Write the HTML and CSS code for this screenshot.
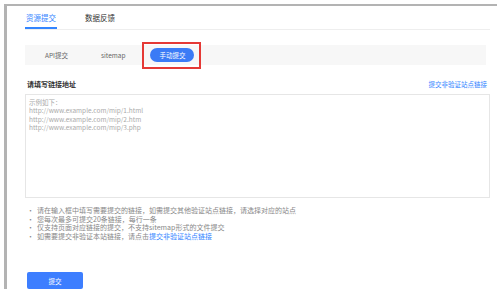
FILE: index.html
```html
<!DOCTYPE html>
<html lang="zh-CN">
<head>
    <meta charset="UTF-8">
    <meta name="viewport" content="width=device-width, initial-scale=1.0">
    <title>资源提交</title>
    <link rel="stylesheet" href="styles.css">
</head>
<body>
    <div class="frame">
        <div class="tabs">
            <span class="tab active">资源提交</span>
            <span class="tab">数据反馈</span>
        </div>

        <div class="subtabs">
            <span class="subtab">API提交</span>
            <span class="subtab">sitemap</span>
            <span class="subtab pill-wrap">
                <span class="pill">手动提交</span>
                <span class="mark"></span>
            </span>
        </div>

        <div class="field-head">
            <span class="field-title">请填写链接地址</span>
            <a class="field-link" href="#">提交非验证站点链接</a>
        </div>

        <textarea class="urls" placeholder="示例如下：&#10;http://www.example.com/mip/1.html&#10;http://www.example.com/mip/2.htm&#10;http://www.example.com/mip/3.php"></textarea>

        <ul class="tips">
            <li>请在输入框中填写需要提交的链接，如需提交其他验证站点链接，请选择对应的站点</li>
            <li>您每次最多可提交20条链接，每行一条</li>
            <li>仅支持页面对应链接的提交，不支持sitemap形式的文件提交</li>
            <li>如需要提交非验证本站链接，请点击<a href="#">提交非验证站点链接</a></li>
        </ul>

        <button type="button" class="submit-btn">提交</button>
    </div>
</body>
</html>
```

FILE: styles.css
```css
* {
    box-sizing: border-box;
    margin: 0;
    padding: 0;
}

body {
    background: #fff;
    font-family: "Noto Sans CJK SC", "Noto Sans", sans-serif;
    color: #333;
}

/* Frame */
.frame {
    margin: 4px 3px 0 4px;
    border-top: 2px solid #b3b3b3;
    border-left: 3px solid #b3b3b3;
    padding: 0 7px 0 18px;
}

/* Top tabs */
.tabs {
    display: flex;
    gap: 27px;
    border-bottom: 1px solid #eeeeee;
    padding-top: 2px;
}

.tab {
    font-size: 7.5px;
    line-height: 10px;
    padding: 5px 1px 4px;
    border-bottom: 2px solid transparent;
    color: #333;
}

.tab.active {
    color: #3385ff;
    border-bottom-color: #3385ff;
}

/* Sub tabs */
.subtabs {
    display: flex;
    align-items: center;
    gap: 17px;
    margin: 15px 4px 0 0;
    height: 20px;
    padding-left: 12px;
    background: #f7f7f7;
}

.subtab {
    font-size: 6.5px;
    line-height: 14px;
    padding: 0 8px;
    color: #666;
}

.pill-wrap {
    position: relative;
    padding: 0;
}

.pill {
    display: block;
    height: 14px;
    padding: 0 9px;
    border-radius: 7px;
    background: #3b7bf6;
    color: #fff;
}

.mark {
    position: absolute;
    left: -8px;
    top: -6px;
    right: -7px;
    bottom: -7px;
    border: 2px solid #e53935;
}

/* Field */
.field-head {
    display: flex;
    justify-content: space-between;
    align-items: center;
    margin-top: 14px;
    padding: 0 3px 0 2px;
    line-height: 10px;
}

.field-title {
    font-size: 7px;
    font-weight: bold;
    color: #333;
}

.field-link {
    font-size: 6.5px;
    color: #3385ff;
    text-decoration: none;
}

.urls {
    display: block;
    width: 100%;
    height: 104px;
    margin-top: 5px;
    padding: 3px 3px;
    border: 1px solid #e6e6e6;
    font-family: "Noto Sans CJK SC", "Noto Sans", sans-serif;
    font-size: 6.5px;
    line-height: 8.3px;
    resize: none;
    outline: none;
}

.urls::placeholder {
    color: #aaa;
}

/* Tips */
.tips {
    list-style: none;
    margin-top: 8px;
}

.tips li {
    font-size: 7px;
    line-height: 8.5px;
    color: #888;
}

.tips li::before {
    content: "•";
    display: inline-block;
    width: 10px;
    padding-left: 2px;
    color: #888;
}

.tips a {
    color: #3385ff;
    text-decoration: none;
}

/* Button */
.submit-btn {
    display: block;
    width: 56px;
    height: 17px;
    margin: 32px 0 0 2px;
    border: none;
    border-radius: 2px;
    background: #3d7eff;
    color: #fff;
    font-family: "Noto Sans CJK SC", "Noto Sans", sans-serif;
    font-size: 6.5px;
}
```
